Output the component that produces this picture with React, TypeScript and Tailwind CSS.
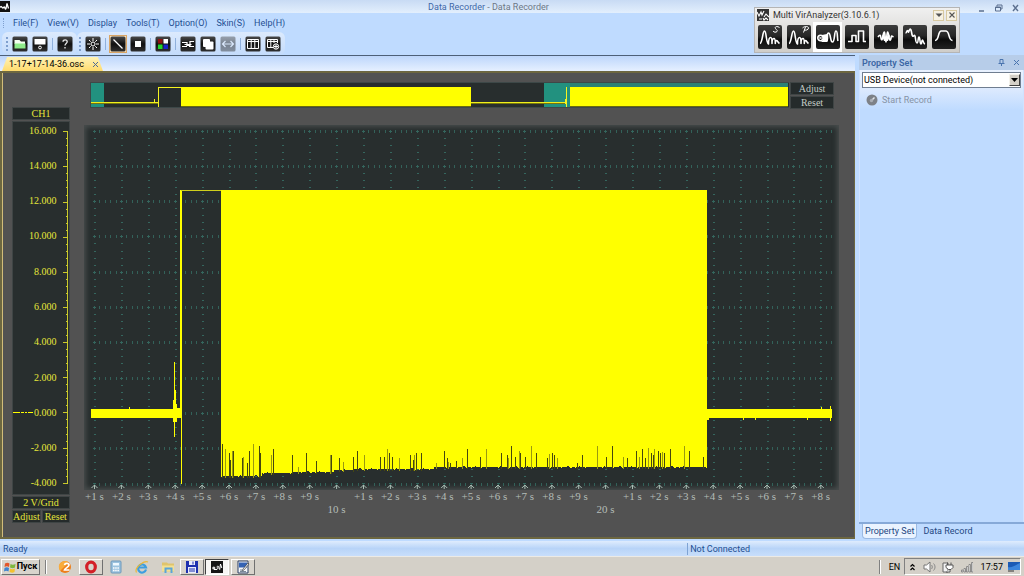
import React from "react";

const UI = "font-['Roboto','Noto_Sans',sans-serif]";
const SERIF = "font-['Liberation_Serif',serif]";

/* ---------- toolbar glyphs, drawn on a 16x16 grid ---------- */

const glyphs: Record<string, React.ReactNode> = {
  open: (
    <>
      <path d="M2.500 4h5l1.500 1.500h4V8h-10.500z" fill="#f4fff0" />
      <path d="M2.500 7.500h11v5h-11z" fill="#8fec8a" />
    </>
  ),
  save: (
    <>
      <path d="M2.500 3h11v5.500h-11z" fill="#fff" />
      <circle cx="8" cy="11.500" r="1.400" fill="none" stroke="#fff" />
    </>
  ),
  help: <path d="M6 5.800c0-2.600 4.200-2.400 4.200 0 0 1.700-2.200 1.600-2.200 3.700M8 11v1.500" fill="none" stroke="#e8e8e8" strokeWidth="1.300" />,
  sun: (
    <g stroke="#fff" fill="none">
      <circle cx="8" cy="8" r="2" />
      <path d="M8 2v3M8 11v3M2 8h3M11 8h3M4 4l1.700 1.700M10.300 10.300L12 12M4 12l1.700-1.700M10.300 5.700L12 4" />
    </g>
  ),
  line: <path d="M3.500 3.500l9 9" stroke="#fff" strokeWidth="1.200" />,
  stop: <path d="M5 5h6v6H5z" fill="#fff" />,
  colors: (
    <>
      <path d="M3 3h4.500v4.500H3z" fill="#8d1010" />
      <path d="M8.500 3H13v4.500H8.500z" fill="#fff" />
      <path d="M3 8.500h4.500V13H3z" fill="#22d32a" />
      <path d="M8.500 8.500H13V13H8.500z" fill="#1a22c8" />
    </>
  ),
  level: <path d="M2 6.500h5v3h3v-4h4M2 10.500h5M9 10.500h5M4.500 8.500h7" stroke="#fff" fill="none" strokeWidth="1.200" />,
  copy: (
    <g fill="#fff">
      <rect x="3" y="3" width="7" height="8" rx="1" />
      <rect x="5.500" y="5.500" width="8" height="8" rx="1" />
    </g>
  ),
  swap: <path d="M3 8h10M5.500 5L2.500 8l3 3M10.500 5l3 3-3 3" fill="none" stroke="#e4ecf8" strokeWidth="1.200" />,
  columns: <path d="M2.500 3.500h11v9h-11zM6.200 3.500v9M9.800 3.500v9M2.500 5.500h11" fill="none" stroke="#fff" />,
  columnsAdd: (
    <g fill="none" stroke="#fff">
      <path d="M8 11.500H2.500v-8h10V7M5.800 3.500v8M9 3.500V7M2.500 5.500h10" />
      <circle cx="11" cy="10.500" r="2.700" fill="#333" />
      <path d="M9 10.500h4M11 8.500v4" />
    </g>
  ),
};

function ToolButton({ name, label, state }: { name: string; label: string; state?: "active" | "disabled" }) {
  return (
    <button
      type="button"
      aria-label={label}
      disabled={state === "disabled"}
      className={
        state === "active"
          ? "flex size-4 items-center justify-center bg-[#fbe3bb] outline outline-[#d9a566]"
          : state === "disabled"
            ? "flex size-4 items-center justify-center opacity-45"
            : "flex size-4 items-center justify-center"
      }
    >
      <svg viewBox="0 0 16 16" className="size-4">
        <defs>
          <linearGradient id={"tb-" + name} x1="0" y1="0" x2="0" y2="1">
            <stop offset="0" stopColor="#4a4a4a" />
            <stop offset="0.500" stopColor="#101010" />
            <stop offset="1" stopColor="#303030" />
          </linearGradient>
        </defs>
        <rect x="0.500" y="0.500" width="15" height="15" rx="1.500" fill={"url(#tb-" + name + ")"} />
        {glyphs[name]}
      </svg>
    </button>
  );
}

const Sep = () => <span className="h-3 w-px bg-[#8fb0dc]" />;
const Grip = () => <span className="h-3.5 w-0 border-l-2 border-dotted border-[#7f9fce]" />;

/* ---------- menu and title ---------- */

function TitleBar() {
  return (
    <header className="flex h-[13px] shrink-0 items-center bg-linear-to-b from-[#c8dbf4] to-[#e3effd]">
      <svg viewBox="0 0 10 11" className="h-[11px] w-2.5">
        <path d="M0 0h10v11H0z" fill="#111" />
        <path d="M0 6.500c2-3 2 2 3.500 0s1.500 3 2.500 1l1-5 1.500 5" fill="none" stroke="#fff" strokeWidth="1.300" />
      </svg>
      <h1 className="flex-1 pr-2.5 text-center text-[9px] leading-3 font-normal text-[#6d7886]">
        <span className="text-[#3f68a8]">Data Recorder</span> - Data Recorder
      </h1>
      <div className="flex items-center gap-2 pt-0.5 pr-1 text-[#5b6f8f]">
        <button type="button" aria-label="Minimize">
          <svg viewBox="0 0 9 9" className="size-[9px]"><path d="M2 8h5" stroke="currentColor" strokeWidth="1.500" /></svg>
        </button>
        <button type="button" aria-label="Restore">
          <svg viewBox="0 0 9 9" className="size-[9px]"><path d="M3 3.500V2h5v4H6.500M1.500 4h5v4h-5zM1.500 4.500h5" fill="none" stroke="currentColor" /></svg>
        </button>
        <button type="button" aria-label="Close">
          <svg viewBox="0 0 9 9" className="size-[9px]"><path d="M2 2l5 6M7 2L2 8" stroke="currentColor" strokeWidth="1.400" /></svg>
        </button>
      </div>
    </header>
  );
}

const menus = ["File(F)", "View(V)", "Display", "Tools(T)", "Option(O)", "Skin(S)", "Help(H)"];

function MenuBar() {
  return (
    <nav className="flex h-[19px] shrink-0 items-center pl-[3px]">
      <span className="h-2.5 w-0 border-l border-dotted border-[#7f9fce]" />
      <ul className="flex gap-[9px] pl-[9px] text-[9px] leading-3 text-[#1f4f92]">
        {menus.map((m) => (
          <li key={m}><button type="button">{m}</button></li>
        ))}
      </ul>
    </nav>
  );
}

function ToolBar() {
  return (
    <div className="flex h-[23px] shrink-0 items-start">
      <div className="ml-0.5 flex h-[23px] items-center gap-1 rounded-md bg-linear-to-b from-[#dceafd] to-[#c3dbfb] pr-1 pl-1">
        <Grip />
        <ToolButton name="open" label="Open" />
        <ToolButton name="save" label="Save" />
        <Sep />
        <ToolButton name="help" label="Help" />
      </div>
      <div className="flex h-[23px] items-center gap-1 rounded-md bg-linear-to-b from-[#dceafd] to-[#c3dbfb] pr-1 pl-0.5">
        <Grip />
        <ToolButton name="sun" label="Settings" />
        <Sep />
        <ToolButton name="line" label="Line" state="active" />
        <ToolButton name="stop" label="Points" />
        <Sep />
        <ToolButton name="colors" label="Colors" />
        <Sep />
        <ToolButton name="level" label="Level" />
        <ToolButton name="copy" label="Copy" />
        <ToolButton name="swap" label="Fit width" state="disabled" />
        <Sep />
        <ToolButton name="columns" label="Columns" />
        <ToolButton name="columnsAdd" label="Column options" />
      </div>
    </div>
  );
}

/* ---------- floating analyzer palette ---------- */

const spectrum =
  "M2 18.500C4.500 18 4.500 6 6.500 6S8 18 10.500 19C10.500 15 11.500 12.500 12.700 12.500s1.300 3 1.300 6c0-3 1-5 2-5s1.300 2 1.300 5c0-1.500.6-3 1.400-3s1 2 2.800 3";

const analyzers = [
  { label: "Spectrum", d: spectrum, mark: "M21.500 2.500c-3-2-5-.5-4 1s2.500 2 1.500 3-3 1-4-.5", fill: "" },
  { label: "Power", d: spectrum, mark: "M16.500 7.500l2-5.500M15.500 3c2-2 6-2 6 0s-3 2.500-4.500 2", fill: "" },
  {
    label: "Data Recorder",
    d: "M1.800 13a2.700 2.700 0 1 0 5.400 0 2.700 2.700 0 1 0-5.400 0M10 16c3 0 0-8 2.500-8s1.500 9 4 9 1.500-11 3.500-11 1 8 2 10",
    mark: "M3 11.500l3 3M6 11.500l-3 3",
    fill: "M6 10l5-1 1 7-1 1H5l2-2z",
  },
  { label: "Logic", d: "M3 16.500h4v-6h4v6h2.500V6h5v10.500H21", mark: "", fill: "" },
  { label: "Burst", d: "M4 12c2-3 2.500-2 3 1s1.500 2 2-2 1-4 1.500-4 .8 10 1.500 10 .8-10 1.500-10 1 1 1.500 5 1.500 4 2 1 1-2 2.500-1", mark: "", fill: "M8 11l2-3 2 8 2-8 2 3-2 5h-4z" },
  { label: "Decay", d: "M2.500 8c1.500 0 1-2.500 2-2.500S5 9 6 6s2-2 2.500 1 1 5 2 4 1-1 1.500 0 .5 7 2 7 .8-6 2-6 .7 7 2 7 .4-4 1.400-4 .6 3.500 2.600 4", mark: "", fill: "" },
  { label: "Filter", d: "M3 15.500c4.500 0 2.500-9 6-9.500h5c4 .5 2 9.500 6.500 9.500", mark: "", fill: "" },
];

function AnalyzerPalette() {
  return (
    <section className="absolute top-[7px] right-16 flex h-[46px] w-[206px] flex-col border border-[#b5b5b5] bg-linear-to-b from-[#f0f0f0] to-[#cfcdc9]">
      <div className="flex h-3.5 items-center pr-0.5 pl-0.5">
        <svg viewBox="0 0 12 12" className="size-3">
          <path d="M0 0h12v12H0z" fill="#333" />
          <path d="M0 3l2 4 2-4 1 3 2-4M7 8l2-3 3 3M2 10h3M6 9l1 2 2-2 2 2" fill="none" stroke="#fff" strokeWidth="1.100" />
        </svg>
        <h2 className="flex-1 pl-1 text-[9px] leading-3 font-normal text-[#333]">Multi VirAnalyzer(3.10.6.1)</h2>
        <button type="button" aria-label="Options" className="mr-0.5 flex size-[11px] items-center justify-center border border-[#d8c9a0] bg-[#f6f1e3]">
          <svg viewBox="0 0 8 8" className="size-2"><path d="M.5 2.500h7L4 6z" fill="#555" /></svg>
        </button>
        <button type="button" aria-label="Close palette" className="flex size-[11px] items-center justify-center border border-[#d8c9a0] bg-[#f6f1e3]">
          <svg viewBox="0 0 8 8" className="size-2"><path d="M1.500 1.500l5 5M6.500 1.500l-5 5" stroke="#555" strokeWidth="1.100" /></svg>
        </button>
      </div>
      <div className="flex flex-1 items-stretch justify-between">
        {analyzers.map((a) => (
          <button
            key={a.label}
            type="button"
            aria-label={a.label}
            className={a.label === "Data Recorder" ? "flex w-[29px] items-center justify-center bg-white" : "flex w-[29px] items-center justify-center"}
          >
            <svg viewBox="0 0 24 24" className="size-6">
              <defs>
                <linearGradient id={"an-" + a.label.replace(" ", "")} x1="0" y1="0" x2="0" y2="1">
                  <stop offset="0" stopColor="#3c3c3c" />
                  <stop offset="0.450" stopColor="#262626" />
                  <stop offset="0.600" stopColor="#0c0c0c" />
                  <stop offset="1" stopColor="#222" />
                </linearGradient>
              </defs>
              <rect width="24" height="24" rx="2" fill={"url(#an-" + a.label.replace(" ", "") + ")"} />
              <path d={a.fill} fill="#fff" />
              <path d={a.d} fill="none" stroke="#fff" strokeWidth="1.600" strokeLinejoin="round" />
              <path d={a.mark} fill="none" stroke="#fff" strokeWidth="1" />
            </svg>
          </button>
        ))}
      </div>
    </section>
  );
}

/* ---------- charts ---------- */

const STEP_X = 26.9;
const STEP_Y = 35.3;
const X0 = 94.5;
const Y0 = 130.5;

function gridPath() {
  let rows = "";
  for (let r = 0; r <= 10; r++) {
    const y = Math.round(Y0 + r * STEP_Y);
    for (let c = 0; X0 + (c * STEP_X) / 5 < 834; c++) rows += `M${Math.floor(X0 + (c * STEP_X) / 5) + 0.5} ${y - 1}v3`;
  }
  let cols = "";
  for (let c = 0; c < 28; c++) {
    const x = Math.floor(X0 + c * STEP_X);
    for (let r = 0; r <= 50; r++) cols += `M${x - (r % 5 ? 0 : 1)} ${Math.round(Y0 + (r * STEP_Y) / 5) + 0.5}h${r % 5 ? 2 : 3}`;
  }
  return { rows, cols };
}

function caretPath() {
  let d = "";
  for (let c = 0; c < 28; c++) {
    const x = X0 + c * STEP_X;
    d += `M${x - 3} 488l3-3 3 3M${x} 485v4`;
  }
  return d;
}

/* lower envelope of the saturated section: [x, y] breakpoints */
const floor: [number, number][] = [
  [221, 476], [262, 473], [292, 472], [334, 470], [354, 469], [434, 467], [480, 467], [707, 466],
];

function floorAt(x: number) {
  let y = floor[0][1];
  for (const [fx, fy] of floor) if (x >= fx) y = fy;
  return y;
}

function burstPath() {
  let d = "M221 190H707V466";
  for (let x = 706; x >= 221; x--) {
    const n = (x * 7919 + x * x * 31 + (x >> 2) * 17) % 13;
    d += `V${floorAt(x) + (n > 11 ? 1 : n === 3 ? -1 : 0)}H${x}`;
  }
  return d + "Z";
}

const dropouts: [number, number][] = [
  [222, 444], [225, 449], [229, 453], [230, 460], [232, 451], [233, 451], [242, 458], [243, 457], [247, 463], [249, 451],
  [253, 444], [259, 446], [260, 453], [271, 455], [273, 449], [292, 455], [298, 467], [306, 453], [316, 461], [330, 455],
  [331, 455], [339, 458], [343, 462], [353, 457], [357, 451], [364, 455], [380, 457], [384, 457], [387, 449], [389, 453],
  [392, 457], [399, 458], [410, 455], [413, 460], [414, 455], [416, 453], [421, 453], [436, 463], [444, 451], [447, 458],
  [448, 462], [450, 463], [456, 461], [462, 458], [467, 449], [480, 457], [486, 449], [501, 453], [507, 455], [508, 458],
  [511, 446], [515, 457], [519, 451], [520, 453], [525, 457], [531, 446], [536, 453], [547, 458], [549, 454], [552, 453],
  [554, 455], [557, 458], [577, 463], [582, 455], [597, 446], [606, 457], [612, 446], [623, 457], [627, 458], [636, 451],
  [639, 457], [642, 449], [645, 458], [648, 448], [651, 453], [653, 455], [654, 449], [658, 451], [660, 453], [662, 452],
  [664, 453], [670, 449], [684, 446], [689, 451], [703, 457],
];

const grid = gridPath();

function Plot() {
  return (
    <svg
      viewBox="84 125 755 365"
      preserveAspectRatio="none"
      role="img"
      aria-label="Channel 1 voltage over time"
      className="ml-[3px] min-h-0 flex-1 basis-0 self-stretch bg-[#282e2e] shadow-[inset_0_0_5px_2px_#484d4d]"
      shapeRendering="crispEdges"
    >
      <path d={grid.rows} stroke="#336159" />
      <path d={grid.cols} stroke="#35665e" />
      <path d={caretPath()} stroke="#a9bdb4" fill="none" shapeRendering="auto" />
      <g fill="#ffff00">
        <path d="M91 409H129V407H130V409H173V400H174V362H175V390H176V404H177V408H180V190H182V484H181V418H177V422H175V437H174V422H173V418H91Z" />
        <path d="M707 409H821V407H822V409H830V406H831V409H832V418H831V421H830V418H808V420H807V418H756V420H755V418H744V420H743V418H709V420H707Z" />
        <path d={burstPath()} />
      </g>
      <path d="M181 190.500H221" stroke="#cfcf1c" />
      {dropouts.map(([x, y], i) => (
        <path key={x} d={`M${x + 0.5} ${y}V${floorAt(x) + 2}`} stroke={i % 3 === 1 ? "#9a9a10" : "#46480f"} />
      ))}
    </svg>
  );
}

function Overview() {
  return (
    <svg
      viewBox="90 82 699 26"
      preserveAspectRatio="none"
      role="img"
      aria-label="Recording overview"
      className="h-[26px] min-w-0 flex-1 bg-[#282e2e]"
      shapeRendering="crispEdges"
    >
      <path d="M91 83h13v24H91zM544 83h244v24H544z" fill="#22917f" />
      <path d="M570 83h218v4H570z" fill="#2c8174" />
      <path d="M91 102.500h67M471 102.500h95" stroke="#f0f01c" />
      <path d="M91 103.500h67M471 103.500h95" stroke="#77770c" />
      <path d="M158.500 107V87.500H181M154.500 99v4M566.500 87v20M565.500 99v5" stroke="#f4f420" fill="none" />
      <path d="M181 87h290v19H181zM570 87h218v19H570z" fill="#ffff00" />
      <path d="M181 106.500h290M570 106.500h218" stroke="#6b6b0a" />
      <path d="M90.500 82v26M90 82.500h699M90 107.500h699" stroke="#3d4848" fill="none" />
    </svg>
  );
}

const volts = ["16.000", "14.000", "12.000", "10.000", "8.000", "6.000", "4.000", "2.000", "0.000", "-2.000", "-4.000"];

function scalePath() {
  let d = "M5 0V354";
  for (let i = 0; i <= 50; i++) {
    const y = Math.min(353, Math.round(i * 7.06));
    d += `M${i % 5 === 0 ? 0 : 3} ${y + 0.5}H5`;
  }
  return d;
}

const darkBox = "border border-[#3f4545] bg-[#252b2b]";

function ChannelPanel() {
  return (
    <aside className={`${SERIF} flex w-[58px] shrink-0 flex-col pt-[25px] text-[10px] leading-[11px] text-[#e6e63a]`}>
      <h3 className={`${darkBox} h-[13px] text-center font-normal`}>CH1</h3>
      <div className="mt-px flex min-h-0 flex-1 border border-[#3f4545] bg-[#282e2e]">
        <ul className="flex flex-1 flex-col justify-between pt-px pb-1 text-right">
          {volts.map((v) => (
            <li key={v} className="flex h-3.5 items-center justify-end gap-px pr-1.5">
              {v === "0.000" && (
                <svg viewBox="0 0 20 2" className="h-0.5 w-5" shapeRendering="crispEdges">
                  <path d="M0 1h7M8 1h3M12 1h2M15 1h5" stroke="#ffff00" />
                </svg>
              )}
              {v}
            </li>
          ))}
        </ul>
        <svg viewBox="0 0 7 354" preserveAspectRatio="none" className="mt-[9px] mb-2.5 w-[7px]" shapeRendering="crispEdges">
          <path d={scalePath()} stroke="#d0d02c" />
        </svg>
      </div>
      <p className={`${darkBox} mt-px h-[13px] text-center`}>2 V/Grid</p>
      <div className="mt-px grid grid-cols-2 gap-px">
        <button type="button" className={`${darkBox} h-[13px]`}>Adjust</button>
        <button type="button" className={`${darkBox} h-[13px]`}>Reset</button>
      </div>
    </aside>
  );
}

function TimeAxis() {
  return (
    <ol className={`${SERIF} mr-[5px] grid h-[33px] grid-cols-28 text-center text-[11px] leading-3 whitespace-nowrap text-[#b4bdb8]`}>
      {Array.from({ length: 28 }, (_, i) => i + 1).map((n) => (
        <li key={n} className="flex w-full min-w-0 flex-col items-center">
          {n % 10 === 0 ? <span className="pt-[13px]">{n} s</span> : <span>+{n % 10} s</span>}
        </li>
      ))}
    </ol>
  );
}

function Workspace() {
  return (
    <main className="flex min-w-0 flex-1 flex-col border-t border-[#4d6078]">
      <div className="flex h-[15px] shrink-0 items-end bg-linear-to-b from-[#bdd6fb] to-[#e6f0ff] pl-0.5">
        <div className="flex h-3.5 items-center justify-between gap-2 bg-linear-to-b from-[#fff3b5] to-[#ffdb6c] pr-1 pl-[7px] [clip-path:polygon(5%_0,95%_0,100%_100%,0_100%)]">
          <span className="text-[9px] leading-3 text-black">1-17+17-14-36.osc</span>
          <button type="button" aria-label="Close tab">
            <svg viewBox="0 0 7 7" className="size-[7px]"><path d="M1 1l5 5M6 1L1 6" stroke="#4c6a95" /></svg>
          </button>
        </div>
      </div>
      <div className="flex min-h-0 flex-1 gap-[11px] border-2 border-r border-[#6d6740] bg-[#525252] pt-[9px] pr-[15px] pb-3.5 pl-2.5 shadow-[inset_1px_0_0_#d2bd7a]">
        <ChannelPanel />
        <div className="flex min-w-0 flex-1 flex-col">
          <div className="mr-[5px] mb-4 ml-[9px] flex gap-px">
            <Overview />
            <div className={`${SERIF} grid w-11 grid-rows-2 gap-px text-[10px] leading-[11px] text-[#c3ccc6]`}>
              <button type="button" className={darkBox}>Adjust</button>
              <button type="button" className={darkBox}>Reset</button>
            </div>
          </div>
          <Plot />
          <TimeAxis />
        </div>
      </div>
    </main>
  );
}

/* ---------- right panel ---------- */

function PropertyPanel() {
  return (
    <aside className="flex w-[165px] shrink-0 flex-col">
      <div className="flex h-[15px] items-center gap-2 bg-[#b7cde9] pr-1 pl-[3px] text-[#4a74ae]">
        <h2 className="flex-1 text-[9px] leading-3 font-semibold text-[#3c67a5]">Property Set</h2>
        <button type="button" aria-label="Pin">
          <svg viewBox="0 0 7 7" className="size-[7px]"><path d="M2 .5h3v4H2zM.5 4.500h6M3.500 4.500V7" fill="none" stroke="currentColor" /></svg>
        </button>
        <button type="button" aria-label="Close panel">
          <svg viewBox="0 0 7 7" className="size-[7px]"><path d="M1 1l5 5M6 1L1 6" stroke="currentColor" /></svg>
        </button>
      </div>
      <div className="flex flex-1 flex-col border-x border-[#cfe3ff]">
        <div className="bg-linear-to-b from-[#e9f2ff] via-[#dbe9fe] to-[#bfdbff] px-0.5 pt-0.5 pb-1">
          <div className="flex h-4 items-center border border-[#6f7d90] bg-white">
            <select
              aria-label="Device"
              className="h-3.5 min-w-0 flex-1 appearance-none pl-px text-[9px] leading-3 text-black outline-none"
            >
              <option>USB Device(not connected)</option>
            </select>
            <span className="flex h-3 w-[11px] items-center justify-center border border-[#f4f2ec] border-r-[#404040] border-b-[#404040] bg-[#d4d0c8]">
              <svg viewBox="0 0 7 4" className="h-1 w-[7px]"><path d="M0 0h7L3.500 4z" fill="#000" /></svg>
            </span>
          </div>
          <button type="button" disabled className="flex items-center gap-1 pt-1.5 pl-1 text-[9px] leading-3 text-[#8793a5]">
            <svg viewBox="0 0 12 12" className="size-3">
              <circle cx="6" cy="6" r="5.500" fill="#7d8187" />
              <path d="M8.500 3.500l-3 3" stroke="#e4e7eb" strokeWidth="1.500" />
              <circle cx="5.500" cy="6.500" r="1.700" fill="#a9adb3" />
            </svg>
            Start Record
          </button>
        </div>
      </div>
      <div role="tablist" className="flex h-[17px] items-start gap-1.5 border-t-2 border-[#86a9d8] pl-[3px] text-[9px] leading-[14px] text-[#24477f]">
        <button role="tab" aria-selected="true" type="button" className="rounded-b-sm border border-t-0 border-[#9bb9e2] bg-[#eaf3ff] px-0.5">Property Set</button>
        <button role="tab" aria-selected="false" type="button">Data Record</button>
      </div>
    </aside>
  );
}

/* ---------- status bar and taskbar ---------- */

function StatusBar() {
  return (
    <footer className="flex h-[15px] shrink-0 items-center bg-linear-to-b from-[#dfecfd] via-[#b8d4f8] to-[#c8defb] text-[9px] leading-3 text-[#1f4f92]">
      <span className="w-[67.2%] border-r border-[#7fa3d4] pl-[3px]">Ready</span>
      <span className="pl-0.5">Not Connected</span>
    </footer>
  );
}

const raised = "flex h-4 items-center justify-center border border-white border-r-[#707070] border-b-[#707070] bg-[#d8d4cc]";

function Taskbar() {
  return (
    <div className="flex h-5 shrink-0 items-center border-t border-[#eceae5] bg-[#d4d0c8] pl-px">
      <button type="button" className={`${raised} w-[39px] gap-px text-[9px] font-bold text-black`}>
        <svg viewBox="0 0 12 12" className="size-3">
          <path d="M1 2.500c2-1 3-1 4.500 0L5 6C3.500 5 2 5 .5 6z" fill="#e2562a" />
          <path d="M6.500 3c1.500 1 3 1 5 0L11 6.500c-1.500 1-3 1-5 0z" fill="#7eb83d" />
          <path d="M.5 7c1.500-1 3-1 4.500 0l-.5 3.500C3 9.500 1.500 9.500 0 10.500z" fill="#3f83cf" />
          <path d="M6 7.500c1.500 1 3 1 5 0l-.5 3.500c-1.500 1-3 1-5 0z" fill="#f3c22e" />
        </svg>
        Пуск
      </button>
      <span className="ml-[5px] h-3.5 w-0.5 border-l border-[#808080] bg-white" />
      <div className="ml-2.5 flex items-center">
        <button type="button" aria-label="Browser 2" className="flex w-[15px] justify-center">
          <svg viewBox="0 0 14 14" className="size-3.5">
            <circle cx="7" cy="7" r="6" fill="#ee7f1a" />
            <path d="M1 5c2-4 7-5 9-3l-3 4-5 5C1 9 .500 7 1 5z" fill="#f9ac3c" />
            <path d="M6.500 5C7 2.800 11 2.800 11 5c0 2-4 3-4.500 5H11.500" fill="none" stroke="#fff" strokeWidth="1.700" />
          </svg>
        </button>
        <button type="button" aria-label="Opera" className={`${raised} ml-[7px] w-6`}>
          <svg viewBox="0 0 14 14" className="size-3.5"><ellipse cx="7" cy="7" rx="4.300" ry="4.800" fill="none" stroke="#d31f27" strokeWidth="3.200" /></svg>
        </button>
        <button type="button" aria-label="Calculator" className="ml-1.5 flex w-3.5 justify-center">
          <svg viewBox="0 0 12 14" className="h-3.5 w-3">
            <rect x="1" y="1" width="10" height="12" rx="1" fill="#9cc3df" stroke="#6e98ba" />
            <path d="M3 3h6v2.500H3z" fill="#eef8ff" />
            <path d="M3 8h6M3 10.500h6" stroke="#fff" strokeWidth="1.500" strokeDasharray="1.500 .7" />
          </svg>
        </button>
        <button type="button" aria-label="Internet Explorer" className="ml-3 flex w-3.5 justify-center">
          <svg viewBox="0 0 14 14" className="size-3.5">
            <path d="M11 9.500A4 4 0 1 1 11 7.500H4" fill="none" stroke="#3c9ee0" strokeWidth="2.200" />
            <path d="M1.500 12.500C-1 8 9 0 13 2" fill="none" stroke="#e9b83a" strokeWidth="1.200" />
          </svg>
        </button>
        <button type="button" aria-label="Explorer" className="ml-3 flex w-3.5 justify-center">
          <svg viewBox="0 0 14 14" className="size-3.5">
            <path d="M1 2.500h5l1 1h6v8H1z" fill="#dfc46c" />
            <path d="M1 5.500h12v6H1z" fill="#f3e093" />
            <path d="M4.500 13V8.500h6V13" fill="none" stroke="#5aa5d8" strokeWidth="2" />
          </svg>
        </button>
        <button type="button" aria-label="Commander" className={`${raised} ml-[5px] w-6`}>
          <svg viewBox="0 0 14 14" className="size-3.5">
            <path d="M1 1h12v12H1z" fill="#1d2fae" />
            <path d="M4 1h6v4H4zM3 7h8v6H3z" fill="#e9ecfb" />
            <path d="M8 1.500v3M4 9h6M4 11h6" stroke="#1d2fae" />
          </svg>
        </button>
        <button type="button" aria-label="Data Recorder" className="ml-px flex h-4 w-6 items-center justify-center border border-[#404040] border-r-white border-b-white bg-[#f7f6f4]">
          <svg viewBox="0 0 12 12" className="size-3">
            <path d="M0 0h12v12H0z" fill="#151515" />
            <circle cx="2.800" cy="7" r="1.600" fill="#ddd" />
            <path d="M3 8.500h3c1-1-.5-3 .7-3.500s1 3.500 2 3.500L9.500 3l1.300 4" fill="none" stroke="#fff" />
          </svg>
        </button>
        <button type="button" aria-label="Editor" className={`${raised} ml-0.5 w-6`}>
          <svg viewBox="0 0 14 14" className="size-3.5">
            <path d="M2 1h10v12H2z" fill="#f4f6fa" stroke="#2c3e62" />
            <path d="M3 2.500h8v5H3z" fill="#3563b4" />
            <path d="M12 3L7 9l-1 2 2-1 5-6z" fill="#fff" stroke="#222" strokeWidth=".6" />
            <path d="M4 10h3M4 11.500h6" stroke="#7a8798" />
          </svg>
        </button>
      </div>
      <div className="ml-auto flex items-center pr-[3px] text-[9px] leading-3 text-black">
        <span className="h-3.5 w-0.5 border-l border-[#808080] bg-white" />
        <span className="w-[23px] pl-1 text-center">EN</span>
        <div className="flex h-[17px] items-center border border-[#808080] border-r-white border-b-white pl-1">
          <button type="button" aria-label="Show hidden icons">
            <svg viewBox="0 0 7 8" className="h-2 w-[7px]"><path d="M1.500 3.500l2-2 2 2M1.500 7l2-2 2 2" fill="none" stroke="#000" strokeWidth="1.200" /></svg>
          </button>
          <svg viewBox="0 0 13 12" className="ml-[7px] h-3 w-[13px]">
            <path d="M1 4h2.500L7 1v10L3.500 8H1z" fill="#fafafa" stroke="#777" />
            <path d="M8.500 4c1 1 1 3 0 4M10.500 2.500c2 2 2 5 0 7" fill="none" stroke="#888" />
          </svg>
          <svg viewBox="0 0 12 12" className="ml-1.5 size-3">
            <path d="M1 2h5v9H1z" fill="#f3f3f3" stroke="#666" />
            <path d="M4 4h7v2.500L9 8.500H6.500L4 6.500zM5.500 1.500V4M9 1.500V4M8 8.500V11H4" fill="#fff" stroke="#555" />
          </svg>
          <svg viewBox="0 0 12 12" className="ml-[7px] size-3">
            <path d="M.5 9h1.500v2H.5zM3 7.500h1.500V11H3zM5.500 5.500H7V11H5.500zM8 3.500h1.500V11H8zM10.500 1.500H12V11h-1.500z" fill="#fff" stroke="#777" strokeWidth=".8" />
          </svg>
          <time className="w-[30px] text-right">17:57</time>
          <svg viewBox="0 0 12 10" className="ml-[5px] h-2.5 w-3">
            <path d="M0 0h12v8H0z" fill="#1c5bb5" />
            <path d="M0 5c4 1 7-2 12-4v7H0z" fill="#3d86dc" />
            <path d="M0 9h6" stroke="#333" />
          </svg>
        </div>
      </div>
    </div>
  );
}

export default function App() {
  return (
    <div className={`${UI} relative flex h-screen min-h-96 flex-col overflow-hidden bg-[#bfdbff]`}>
      <TitleBar />
      <MenuBar />
      <ToolBar />
      <div className="flex min-h-0 flex-1 gap-1 pb-0.5">
        <Workspace />
        <PropertyPanel />
      </div>
      <StatusBar />
      <Taskbar />
      <AnalyzerPalette />
    </div>
  );
}
